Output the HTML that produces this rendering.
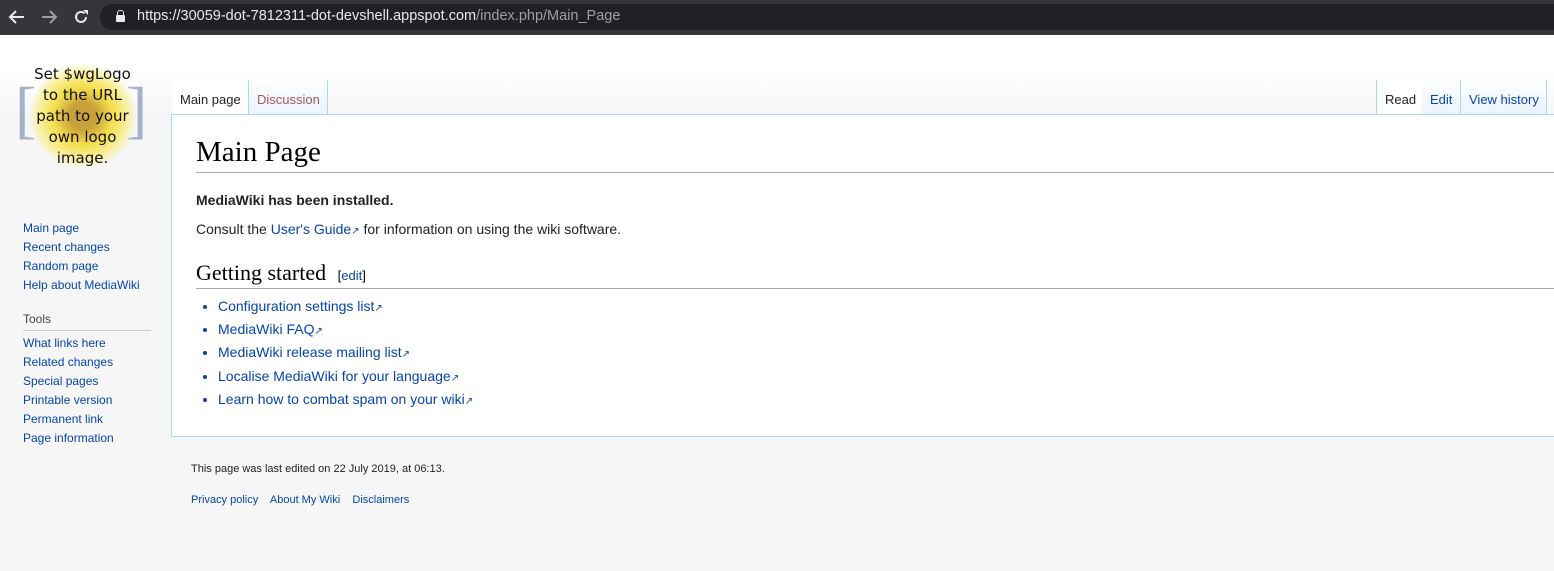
<!DOCTYPE html>
<html><head><style>
body{margin:0;width:1554px;height:571px;overflow:hidden;background:#f6f6f6;font-family:"Liberation Sans",sans-serif;position:relative}
.bar{position:absolute;left:0;top:0;width:1554px;height:35px;background:#35363a}
.url{position:absolute;left:100px;top:4px;width:1470px;height:26px;border-radius:14px;background:#202124}
.urltext{position:absolute;left:37px;top:4px;font-size:14.5px;color:#e8eaed;white-space:nowrap}
.top{position:absolute;left:0;top:35px;width:1554px;height:80px;background:linear-gradient(#fff 40%,#f6f6f6)}
a{color:#0645ad;text-decoration:none}
.tab{position:absolute;top:80px;height:34px;font-size:13px;background:linear-gradient(#fff,#eaf3ff);border-right:1px solid #a7d7f9}
.tab span{position:absolute;top:12px;left:8px;white-space:nowrap}
.content{position:absolute;left:171px;top:114px;width:1383px;height:321px;background:#fff;border-left:1px solid #a7d7f9;border-bottom:1px solid #a7d7f9;border-top:1px solid #a7d7f9}
.nav{position:absolute;left:23px;font-size:12px;line-height:19px}
.ext{font-size:10px;line-height:0}
li{margin:0}
</style></head><body>
<div class="bar">
<svg style="position:absolute;left:8px;top:9px" width="18" height="16" viewBox="0 0 18 16"><path d="M16 8H3M8 2L2 8l6 6" stroke="#e8eaed" stroke-width="2" fill="none"/></svg>
<svg style="position:absolute;left:40px;top:9px" width="18" height="16" viewBox="0 0 18 16"><path d="M2 8h13M10 2l6 6-6 6" stroke="#9aa0a6" stroke-width="2" fill="none"/></svg>
<svg style="position:absolute;left:72px;top:8px" width="18" height="18" viewBox="0 0 18 18"><path d="M14 9a5 5 0 1 1-1.5-3.6" stroke="#e8eaed" stroke-width="2" fill="none"/><path d="M11 2h5v5z" fill="#e8eaed"/></svg>
<div class="url"><div style="position:absolute;left:16px;top:11px;width:9px;height:7px;background:#e8eaed;border-radius:1px"></div><div style="position:absolute;left:17px;top:6px;width:5px;height:6px;border:1.5px solid #e8eaed;border-bottom:none;border-radius:3px 3px 0 0"></div><div class="urltext">https://30059-dot-7812311-dot-devshell.appspot.com<span style="color:#9aa0a6">/index.php/Main_Page</span></div></div></div>
<div class="top"></div>
<div style="position:absolute;left:15px;top:80px;color:#97a6c4;font-size:64px;font-family:'Liberation Serif';line-height:60px;opacity:.85">[</div>
<div style="position:absolute;left:126px;top:80px;color:#97a6c4;font-size:64px;font-family:'Liberation Serif';line-height:60px;opacity:.85">]</div>
<div style="position:absolute;left:30px;top:64px;width:106px;height:104px;border-radius:50%;background:radial-gradient(#c9a13a 18%,#f4e04e 40%,rgba(250,235,110,.6) 60%,transparent 72%)"></div>
<div style="position:absolute;left:10px;top:64px;width:145px;text-align:center;font-family:'DejaVu Sans';font-size:15px;line-height:21px;color:#111">Set $wgLogo<br>to the URL<br>path to your<br>own logo<br>image.</div>
<div class="tab" style="left:172px;width:76px;background:#fff"><span style="color:#222">Main page</span></div>
<div class="tab" style="left:249px;width:78px;border-left:0"><span style="color:#a55858">Discussion</span></div>
<div class="tab" style="left:1376px;width:45px;background:#fff;border-left:1px solid #a7d7f9"><span style="color:#222">Read</span></div>
<div class="tab" style="left:1422px;width:38px"><span style="color:#0645ad">Edit</span></div>
<div class="tab" style="left:1461px;width:85px"><span style="color:#0645ad">View history</span></div>
<div class="content">
<div style="position:absolute;left:24px;top:21px;width:1359px;font-family:'Liberation Serif';font-size:29px;color:#000;border-bottom:1px solid #a2a9b1;padding-bottom:3px">Main Page</div>
<div style="position:absolute;left:24px;top:77px;font-size:14px;font-weight:bold;color:#222">MediaWiki has been installed.</div>
<div style="position:absolute;left:24px;top:106px;font-size:14px;color:#222">Consult the <a href="#">User's Guide<span class="ext">&#8599;</span></a> for information on using the wiki software.</div>
<div style="position:absolute;left:24px;top:145px;width:1359px;font-family:'Liberation Serif';font-size:22px;color:#000;border-bottom:1px solid #a2a9b1;padding-bottom:2px">Getting started <span style="font-family:'Liberation Sans';font-size:13px;margin-left:6px">[<a href="#">edit</a>]</span></div>
<ul style="position:absolute;left:23px;top:180px;margin:0;padding-left:23px;font-size:14px;line-height:23.2px;color:#0645ad;list-style:disc">
<li><a href="#">Configuration settings list<span class="ext">&#8599;</span></a></li>
<li><a href="#">MediaWiki FAQ<span class="ext">&#8599;</span></a></li>
<li><a href="#">MediaWiki release mailing list<span class="ext">&#8599;</span></a></li>
<li><a href="#">Localise MediaWiki for your language<span class="ext">&#8599;</span></a></li>
<li><a href="#">Learn how to combat spam on your wiki<span class="ext">&#8599;</span></a></li></ul>
</div>
<div class="nav" style="top:219px"><a href="#">Main page</a><br><a href="#">Recent changes</a><br><a href="#">Random page</a><br><a href="#">Help about MediaWiki</a></div>
<div style="position:absolute;left:23px;top:312px;width:128px;font-size:12px;color:#444;border-bottom:1px solid #c8ccd1;padding-bottom:4px">Tools</div>
<div class="nav" style="top:334px"><a href="#">What links here</a><br><a href="#">Related changes</a><br><a href="#">Special pages</a><br><a href="#">Printable version</a><br><a href="#">Permanent link</a><br><a href="#">Page information</a></div>
<div style="position:absolute;left:191px;top:463px;font-size:11px;color:#222">This page was last edited on 22 July 2019, at 06:13.</div>
<div style="position:absolute;left:191px;top:494px;font-size:11px"><a href="#">Privacy policy</a>&nbsp;&nbsp;&nbsp; <a href="#">About My Wiki</a>&nbsp;&nbsp;&nbsp; <a href="#">Disclaimers</a></div>
</body></html>
